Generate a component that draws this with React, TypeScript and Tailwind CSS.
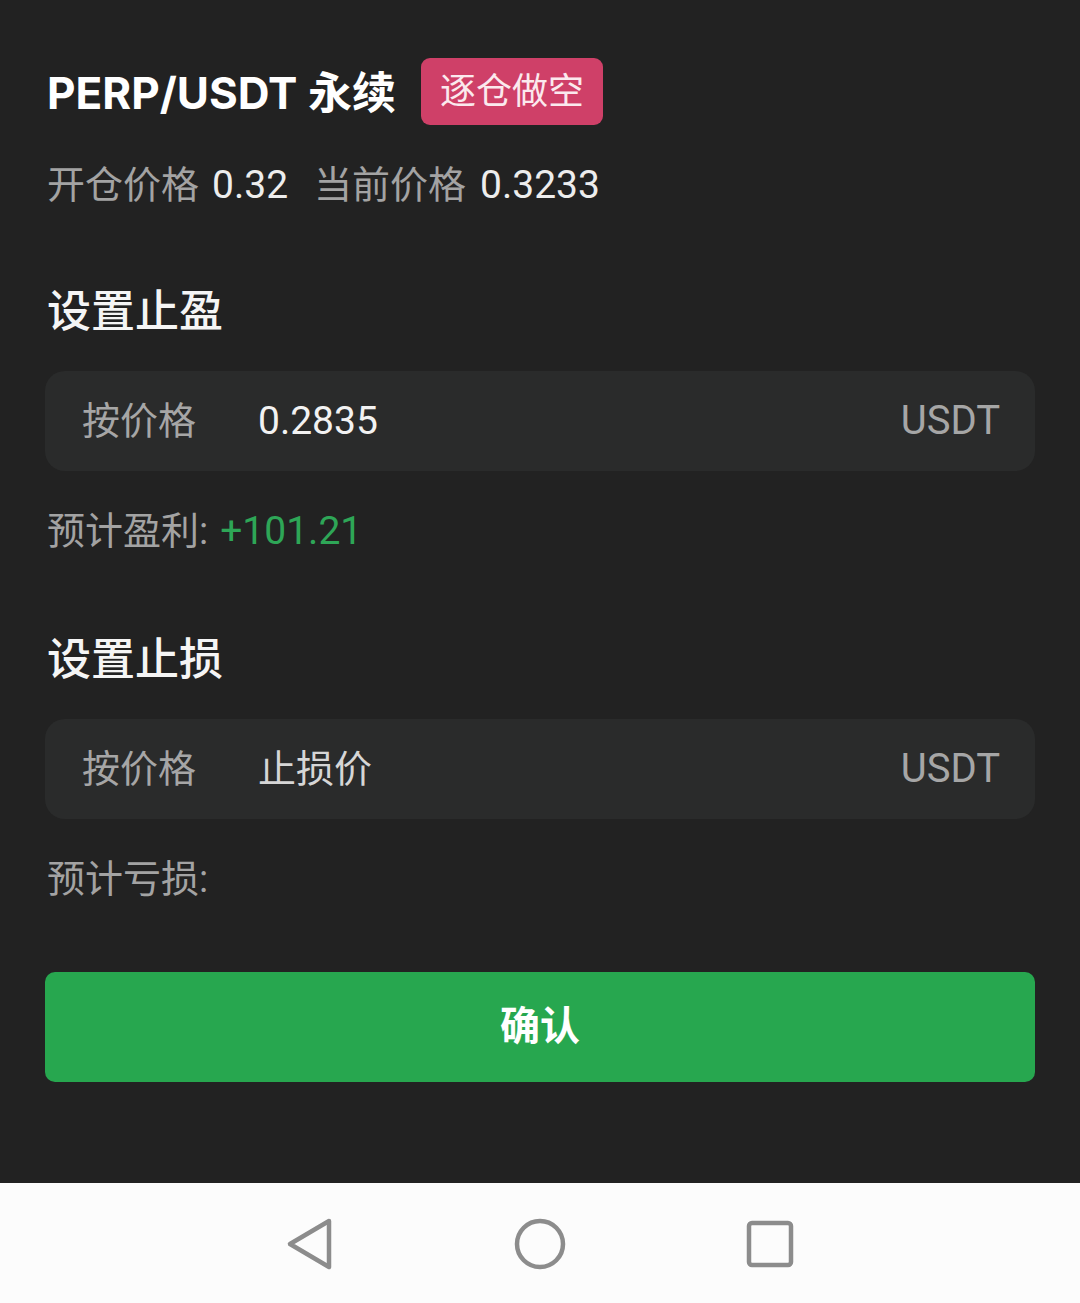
import React from 'react';

const cjk = "font-['Roboto','Noto_Sans_CJK_SC',sans-serif]";

const PriceInput: React.FC<{ label: string; value?: string; placeholder?: string }> = ({ label, value, placeholder }) => (
  <div className="mt-[33px] flex h-[100px] items-center rounded-[20px] bg-[#2a2b2b] pl-[37px] pr-[35px] text-[38px] leading-none">
    <span className="w-[176px] shrink-0 text-[#a6a6a6]">{label}</span>
    {value ? (
      <span className="flex-1 text-[39px] text-[#f2f2f2]">{value}</span>
    ) : (
      <span className="flex-1 text-[#d6d6d6]">{placeholder}</span>
    )}
    <span className="text-[40px] text-[#a6a6a6]">USDT</span>
  </div>
);

const NavBar: React.FC = () => (
  <div className="flex h-[121px] items-center justify-center gap-[178px] bg-[#fcfcfc]">
    <svg width="50" height="54" viewBox="0 0 50 54" fill="none">
      <path d="M44 4 L5 27 L44 50 Z" stroke="#8c8c8c" strokeWidth="4.5" strokeLinejoin="round" />
    </svg>
    <svg width="54" height="54" viewBox="0 0 54 54" fill="none">
      <circle cx="27" cy="27" r="23" stroke="#8c8c8c" strokeWidth="4.5" />
    </svg>
    <svg width="50" height="50" viewBox="0 0 50 50" fill="none">
      <rect x="4" y="4" width="42" height="42" rx="3" stroke="#8c8c8c" strokeWidth="4.5" />
    </svg>
  </div>
);

export default function App() {
  return (
    <div className={`flex min-h-[1303px] w-[1080px] flex-col bg-[#222222] ${cjk}`}>
      <div className="flex-1 px-[45px] pb-[101px] pt-[58px]">
        {/* header */}
        <div className="flex items-center gap-[25px]">
          <h1 className="pl-[2px] pt-[3px] font-['Inter','Noto_Sans_CJK_SC',sans-serif] text-[44px] font-bold leading-none text-white">
            PERP/USDT 永续
          </h1>
          <span className="flex h-[67px] items-center rounded-[9px] bg-[#cf4068] px-[19px] text-[36px] leading-none text-[#fbe9ee]">
            逐仓做空
          </span>
        </div>

        <div className="mt-[36px] flex h-[48px] items-center pl-[2px] text-[38px] leading-none">
          <span className="text-[#a3a3a3]">开仓价格</span>
          <span className="ml-[13px] text-[39px] text-[#ededed]">0.32</span>
          <span className="ml-[26px] text-[#a3a3a3]">当前价格</span>
          <span className="ml-[14px] text-[39px] text-[#ededed]">0.3233</span>
        </div>

        {/* take profit */}
        <h2 className="mt-[77px] flex h-[52px] items-center pl-[2px] text-[44px] font-medium leading-none text-[#f5f5f5]">
          设置止盈
        </h2>
        <PriceInput label="按价格" value="0.2835" />
        <div className="mt-[36px] flex h-[48px] items-center pl-[2px] text-[38px] leading-none">
          <span className="text-[#a3a3a3]">预计盈利:</span>
          <span className="ml-[12px] text-[39px] text-[#2ea657]">+101.21</span>
        </div>

        {/* stop loss */}
        <h2 className="mt-[79px] flex h-[52px] items-center pl-[2px] text-[44px] font-medium leading-none text-[#f5f5f5]">
          设置止损
        </h2>
        <PriceInput label="按价格" placeholder="止损价" />
        <div className="mt-[36px] flex h-[48px] items-center pl-[2px] text-[38px] leading-none">
          <span className="text-[#a3a3a3]">预计亏损:</span>
        </div>

        <button className="mt-[69px] flex h-[110px] w-full items-center justify-center rounded-[10px] bg-[#27a74f] text-[40px] font-bold leading-none text-white">
          确认
        </button>
      </div>
      <NavBar />
    </div>
  );
}
